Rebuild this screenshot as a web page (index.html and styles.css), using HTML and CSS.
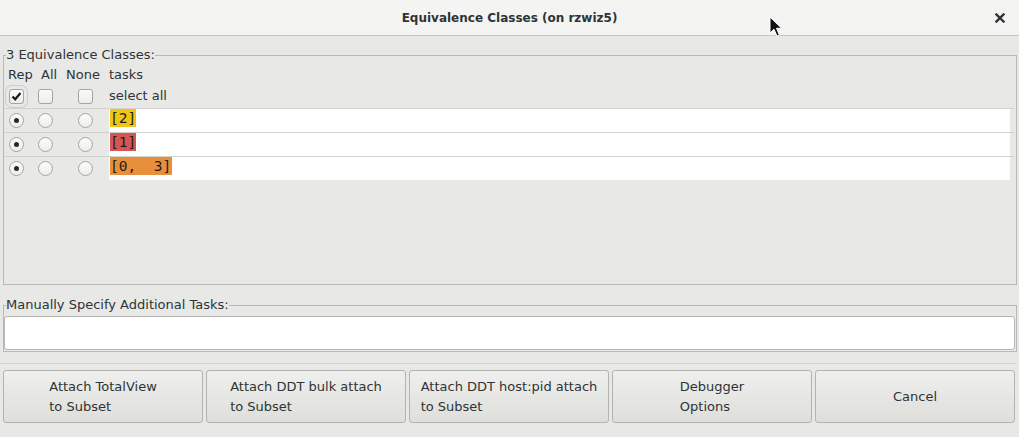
FILE: index.html
```html
<!DOCTYPE html>
<html>
<head>
<meta charset="utf-8">
<link rel="stylesheet" href="styles.css">
</head>
<body>
<div class="titlebar">
  <span></span>
  <span class="title">Equivalence Classes (on rzwiz5)</span>
  <svg class="close" width="10" height="10" viewBox="0 0 10 10"><path d="M1.5 1.5L8.5 8.5M8.5 1.5L1.5 8.5" stroke="#2e3436" stroke-width="2.4" stroke-linecap="square"/></svg>
</div>
<svg class="cursor" width="14" height="22" viewBox="0 0 14 22"><path d="M1 1L1 17L5 13.2L8 20L10.4 19L7.5 12.3L12.6 12.3Z" fill="#111" stroke="#fff" stroke-width="1"/></svg>

<fieldset class="frame classes">
  <legend>3 Equivalence Classes:</legend>
  <div class="table">
    <div class="row head">
      <span class="c1">Rep</span><span class="c2">All</span><span class="c3">None</span><span class="c4">tasks</span>
    </div>
    <div class="row sel">
      <span class="c1"><span class="cb checked focus"><svg width="13" height="13" viewBox="0 0 13 13"><path d="M2.5 6.5L5.2 9.3L10.5 3" fill="none" stroke="#1c1c1c" stroke-width="2.2"/></svg></span></span>
      <span class="c2"><span class="cb"></span></span>
      <span class="c3"><span class="cb"></span></span>
      <span class="c4">select all</span>
    </div>
    <div class="row data">
      <span class="c1"><span class="rb on"></span></span>
      <span class="c2"><span class="rb"></span></span>
      <span class="c3"><span class="rb"></span></span>
      <span class="c4 cell"><span class="tag yellow">[2]</span></span>
    </div>
    <div class="row data">
      <span class="c1"><span class="rb on"></span></span>
      <span class="c2"><span class="rb"></span></span>
      <span class="c3"><span class="rb"></span></span>
      <span class="c4 cell"><span class="tag red">[1]</span></span>
    </div>
    <div class="row data">
      <span class="c1"><span class="rb on"></span></span>
      <span class="c2"><span class="rb"></span></span>
      <span class="c3"><span class="rb"></span></span>
      <span class="c4 cell"><span class="tag orange">[0,  3]</span></span>
    </div>
  </div>
</fieldset>

<fieldset class="frame manual">
  <legend>Manually Specify Additional Tasks:</legend>
  <div class="entry"></div>
</fieldset>

<div class="separator"></div>

<div class="buttons">
  <div class="btn"><span>Attach TotalView<br>to Subset</span></div>
  <div class="btn"><span>Attach DDT bulk attach<br>to Subset</span></div>
  <div class="btn"><span>Attach DDT host:pid attach<br>to Subset</span></div>
  <div class="btn"><span>Debugger<br>Options</span></div>
  <div class="btn"><span>Cancel</span></div>
</div>
</body>
</html>
```

FILE: styles.css
```css
html, body {
  margin: 0;
  padding: 0;
}
body {
  background: #e8e8e7;
  font-family: "DejaVu Sans", "Liberation Sans", sans-serif;
  font-size: 13px;
  color: #2e3436;
  width: 1019px;
  height: 437px;
  overflow: hidden;
  position: relative;
}

.titlebar {
  height: 35px;
  border-bottom: 1px solid #c6c6c3;
  background: #f4f4f3;
  display: grid;
  grid-template-columns: 1fr auto 1fr;
  align-items: center;
}
.title {
  font-weight: bold;
  font-size: 12px;
  color: #2e3436;
}
.close {
  justify-self: end;
  margin-right: 14px;
}
.cursor {
  position: absolute;
  left: 769px;
  top: 16px;
}

.frame {
  margin: 11px 2px 0 3px;
  border: 1px solid #b9b9b6;
  padding: 1px 0 0 0;
  min-width: 0;
}
.frame legend {
  padding: 0;
  margin-left: 2px;
  line-height: 16px;
}

.table {
  height: 220px;
}
.row {
  display: grid;
  grid-template-columns: 32px 28px 45px 1fr;
  align-items: center;
}
.head {
  height: 21px;
}
.sel {
  height: 23px;
}
.data {
  height: 23px;
  border-top: 1px solid #d2d2cf;
  margin-right: 1px;
}
.c1 { padding-left: 5px; display: flex; }
.head .c1 { padding-left: 4px; }
.c2 { padding-left: 2px; display: flex; }
.head .c2 { padding-left: 5px; }
.c3 { padding-left: 14px; display: flex; }
.head .c3 { padding-left: 2px; }
.c4 { display: block; }
.sel .c1, .sel .c2, .sel .c3 { margin-top: -1px; }
.sel .c4 { margin-top: -2px; }
.cell {
  align-self: stretch;
  background: #ffffff;
  margin-right: 5px;
  padding-left: 1px;
}

.cb {
  width: 15px;
  height: 15px;
  box-sizing: border-box;
  border: 1px solid #a4a4a1;
  border-radius: 3px;
  background: linear-gradient(#fbfbfa, #ededeb);
  display: flex;
  align-items: center;
  justify-content: center;
}
.cb.focus {
  box-shadow: 0 0 0 3px #e8e8e7, 0 0 0 4px #cdcdca;
}
.rb {
  width: 15px;
  height: 15px;
  box-sizing: border-box;
  border: 1px solid #a4a4a1;
  border-radius: 50%;
  background: linear-gradient(#fbfbfa, #ededeb);
  display: flex;
  align-items: center;
  justify-content: center;
}
.rb.on::after {
  content: "";
  width: 5px;
  height: 5px;
  border-radius: 50%;
  background: #2a2a2a;
}

.tag {
  display: inline-block;
  font-family: "DejaVu Sans Mono", "Liberation Mono", monospace;
  font-size: 14.5px;
  line-height: 18px;
  color: #1e1e1e;
  white-space: pre;
}
.orange { padding-right: 1px; }
.yellow { background: #f2c512; }
.red { background: #d75454; }
.orange { background: #e88f3b; }

.manual {
  margin-top: 12px;
  padding: 3px 0 1px 0;
}
.entry {
  height: 34px;
  box-sizing: border-box;
  margin-right: 1px;
  background: #ffffff;
  border: 1px solid #b5b5b2;
  border-radius: 3px;
}

.separator {
  height: 1px;
  background: #d3d3d0;
  margin: 11px 3px 0 0;
}

.buttons {
  display: flex;
  gap: 3px;
  margin: 6px 4px 0 3px;
}
.btn {
  flex: 1;
  height: 53px;
  box-sizing: border-box;
  border: 1px solid #b3b3b0;
  border-radius: 3px;
  background: linear-gradient(#efefed, #dededb);
  display: flex;
  align-items: center;
  justify-content: center;
  line-height: 20px;
  color: #2e3436;
}
.btn span {
  text-align: left;
  margin-top: 1px;
}
```
